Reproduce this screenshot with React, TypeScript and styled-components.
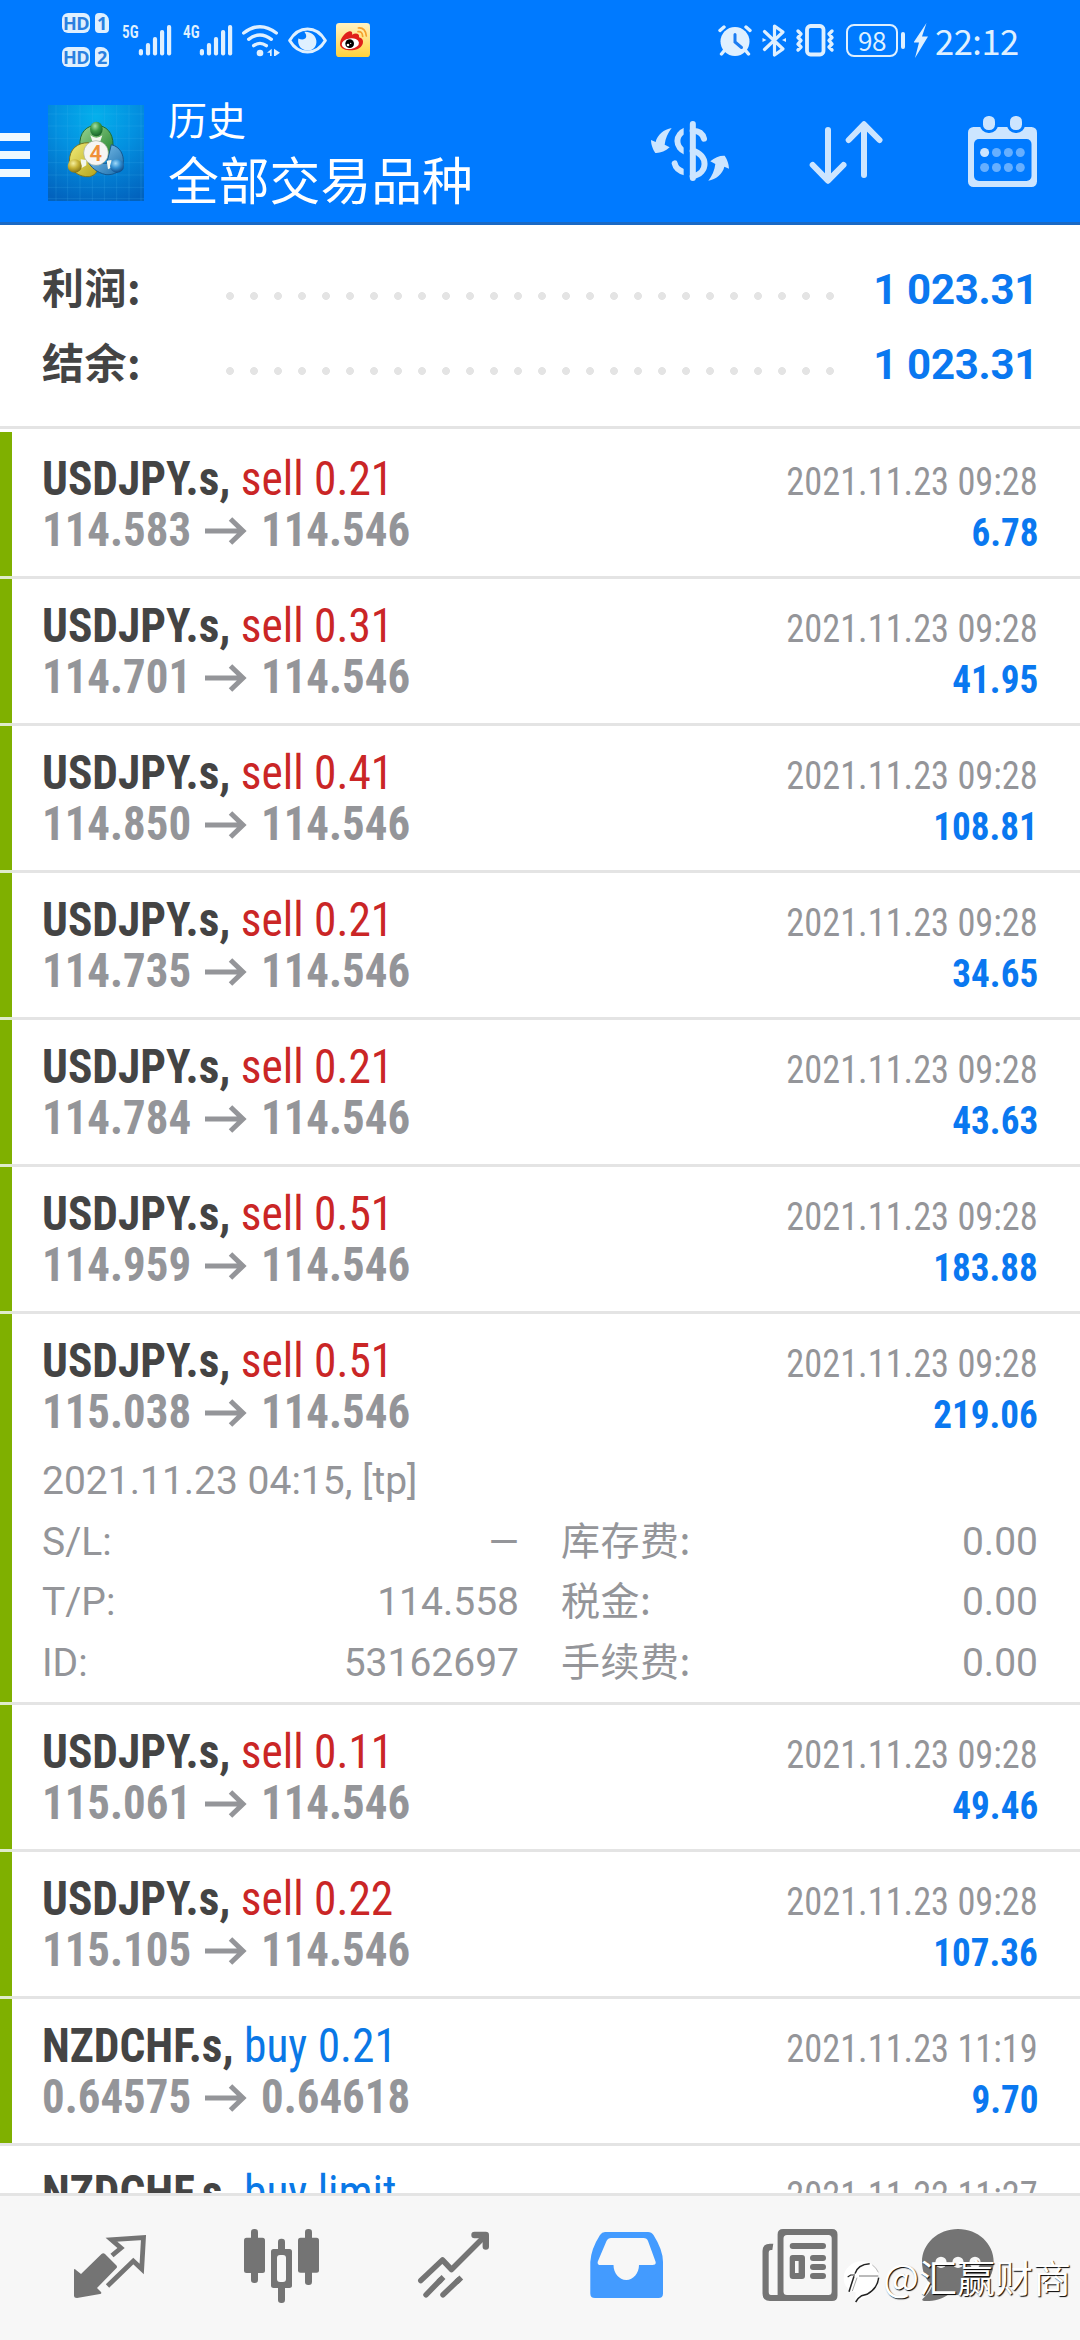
import React from "react";
import styled, { createGlobalStyle, css } from "styled-components";

const BLUE = "#007aff";
const STATUS = "#dff0ff";
const ACTION = "#cce5ff";
const GREEN = "#7fb000";
const GREY = "#949599";
const LINE = "#e4e4e4";
const TAB = "#747474";

const GlobalStyle = createGlobalStyle`
  * { box-sizing: border-box; }
  html, body { margin: 0; padding: 0; background: #fff; }
  body { font-family: Roboto, "Noto Sans CJK SC", sans-serif; overflow: hidden; }
  svg { display: block; flex: none; }
`;

const Screen = styled.div`
  position: relative;
  display: flex;
  flex-direction: column;
  width: 1080px;
  height: 2340px;
  overflow: hidden;
  background: #fff;
`;

/* ---------- header ---------- */

const Header = styled.header`
  flex: none;
  height: 225px;
  background: ${BLUE};
  border-bottom: 3px solid #1a69c4;
`;

const StatusBar = styled.div`
  display: flex;
  justify-content: space-between;
  height: 82px;
  padding: 0 60px 0 62px;
  color: ${STATUS};
`;

const StatusGroup = styled.div`
  display: flex;
  align-items: center;
  height: 80px;
`;

const SimColumn = styled.div`
  display: flex;
  flex-direction: column;
  gap: 14px;
  margin-right: 13px;
`;

const SimRow = styled.div`
  display: flex;
  gap: 5px;
`;

const Badge = styled.span<{ $w: number; $cut?: boolean }>`
  width: ${(p) => p.$w}px;
  height: 20px;
  border-radius: ${(p) => (p.$cut ? "4px 8px 4px 4px" : "6px")};
  background: ${STATUS};
  color: #2a80e0;
  font: 700 18px/21px "Open Sans", sans-serif;
  letter-spacing: -0.5px;
  text-align: center;
`;

const Signal = styled.div<{ $gap: number }>`
  display: flex;
  align-items: flex-start;
  height: 30px;
  margin-right: ${(p) => p.$gap}px;
`;

const NetLabel = styled.span`
  width: 16px;
  font: 600 18.5px/14px "Roboto Condensed", Roboto, sans-serif;
  transform: scaleX(0.82);
  transform-origin: left;
`;

const Clock = styled.span`
  margin-left: 7px;
  font: 400 34.5px/40px "Noto Sans CJK SC", sans-serif;
  letter-spacing: -0.5px;
  width: 85px;
`;

const AppBar = styled.div`
  display: flex;
  align-items: flex-start;
  height: 140px;
  padding-right: 43px;
`;

const Burger = styled.div`
  display: flex;
  flex-direction: column;
  gap: 10px;
  width: 30px;
  margin: 51px 18px 0 0;
`;

const BurgerBar = styled.i`
  height: 8px;
  background: #eef8ff;
`;

const LogoBox = styled.div`
  margin-top: 23px;
  width: 96px;
  height: 96px;
`;

const Titles = styled.div`
  display: flex;
  flex-direction: column;
  flex: 1;
  margin: 8px 0 0 24px;
  color: #fff;
  font-family: "Noto Sans CJK SC", sans-serif;
`;

const Caption = styled.span`
  font-size: 39px;
  line-height: 56px;
`;

const Title = styled.span`
  font-size: 50.8px;
  line-height: 64px;
`;

const Actions = styled.div`
  display: flex;
  align-items: flex-start;
  margin-top: 34px;
`;

const Spaced = styled.div<{ $top?: number; $gap: number }>`
  margin: ${(p) => p.$top ?? 0}px ${(p) => p.$gap}px 0 0;
`;

/* ---------- summary ---------- */

const Summary = styled.section`
  flex: none;
  height: 204px;
  padding: 27px 42px 0;
  border-bottom: 3px solid ${LINE};
`;

const SummaryRow = styled.div`
  display: flex;
  align-items: center;
  height: 75px;
`;

const SummaryLabel = styled.span`
  width: 176px;
  color: #444;
  font: 700 42px/75px Roboto, sans-serif;
`;

const Cjk = styled.span`
  font-family: "Noto Sans CJK SC", sans-serif;
  letter-spacing: 0.5px;
  line-height: 1;
`;

const Leader = styled.span`
  width: 624px;
  height: 24px;
  margin-top: 13px;
  background: radial-gradient(circle at center, ${LINE} 3.6px, transparent 4.2px) 0 0 / 24px 24px repeat-x;
`;

const SummaryValue = styled.span`
  flex: 1;
  color: #0a78f0;
  font: 700 42px/75px Roboto, sans-serif;
  letter-spacing: -0.3px;
  text-align: right;
`;

/* ---------- deals ---------- */

const List = styled.main`
  flex: 1;
  min-height: 0;
  padding-top: 3px;
  overflow: hidden;
`;

const Deal = styled.article<{ $closed: boolean; $tall?: boolean }>`
  height: ${(p) => (p.$tall ? 388 : 144)}px;
  padding: 21px 42px 0 30px;
  border-left: 12px solid ${(p) => (p.$closed ? GREEN : "#fff")};
`;

const Divider = styled.div<{ $tint: boolean }>`
  height: 3px;
  background: ${LINE};
  ${(p) => p.$tint && css`background: linear-gradient(to right, #dfebcb 12px, ${LINE} 12px);`}
`;

const DealLine = styled.div`
  display: flex;
  justify-content: space-between;
  align-items: baseline;
  height: 51px;
  line-height: 51px;
  white-space: pre;
`;

const condensed = css`
  font-family: "Roboto Condensed", Roboto, "Noto Sans CJK SC", sans-serif;
  font-stretch: 75%;
`;

const Symbol = styled.span`
  ${condensed}
  color: #444;
  font-size: 48px;
  font-weight: 700;
  transform: scaleX(0.945);
  transform-origin: left;
`;

const Side = styled.span<{ $buy: boolean }>`
  color: ${(p) => (p.$buy ? "#0a78e6" : "#ca2626")};
  font-weight: 400;
`;

const Prices = styled.span`
  display: flex;
  align-items: center;
  color: ${GREY};
`;

const Price = styled.span`
  ${condensed}
  width: 149px;
  font-size: 48px;
  font-weight: 700;
  transform: scaleX(0.935);
  transform-origin: left;
`;

const ArrowBox = styled.span`
  width: 70px;
  padding: 3px 0 0 14px;
`;

const When = styled.span`
  ${condensed}
  color: ${GREY};
  font-size: 39px;
  transform: scaleX(0.932);
  transform-origin: right;
`;

const Profit = styled.span`
  ${condensed}
  color: #0a78f0;
  font-size: 39px;
  font-weight: 700;
  transform: scaleX(0.952);
  transform-origin: right;
`;

const Details = styled.div`
  margin-top: 14px;
  color: ${GREY};
  font-size: 39px;
  line-height: 60.7px;
`;

const DetailGrid = styled.div`
  display: grid;
  grid-template-columns: 1fr 1fr;
  column-gap: 42px;
`;

const DetailCell = styled.div`
  display: flex;
  justify-content: space-between;
  height: 60.7px;
`;

/* ---------- tab bar ---------- */

const TabBar = styled.nav`
  flex: none;
  display: flex;
  align-items: flex-start;
  height: 147px;
  padding: 33px 0 0 70px;
  border-top: 3px solid ${LINE};
  background: #f7f7f7;
`;

const Tab = styled.div<{ $w: number }>`
  flex: none;
  width: ${(p) => p.$w}px;
`;

const Watermark = styled.div`
  position: absolute;
  left: 843px;
  top: 2249px;
  display: flex;
  align-items: center;
  gap: 2px;
  height: 54px;
  color: #fff;
  font: 400 38px/54px "Noto Sans CJK SC", sans-serif;
  text-shadow: 1px 1px 1px #000;
  white-space: nowrap;
`;

/* ---------- icons ---------- */

const Bars = () => (
  <svg width="34" height="31" viewBox="138 25 34 31" fill={STATUS}>
    <rect x="138.8" y="49" width="4.2" height="6.5" rx="2" />
    <rect x="145.9" y="43" width="4.2" height="12.5" rx="2" />
    <rect x="152.9" y="37" width="4.2" height="18.5" rx="2" />
    <rect x="160" y="30" width="4.2" height="25.5" rx="2" />
    <rect x="167" y="25" width="4.2" height="30.5" rx="2" />
  </svg>
);

const Wifi = () => (
  <svg width="39" height="33" viewBox="36 40 117 99" fill="none" stroke={STATUS} strokeWidth="10" strokeLinecap="round">
    <path d="M41 67Q90 29 139 67" />
    <path d="M56 86Q90 60 124 86" />
    <path d="M71 105Q90 91 109 105" />
    <circle cx="90" cy="127" r="10" fill={STATUS} stroke="none" />
    <path d="M111 126l14-12v22h-5v-10zM132 114l18 12-14 10h-4z" fill={STATUS} stroke="none" />
  </svg>
);

const EyeIcon = () => (
  <svg width="39" height="27" viewBox="173 50 117 80">
    <path d="M178 90C205 44 258 44 285 90C258 136 205 136 178 90Z" fill="none" stroke={STATUS} strokeWidth="9" strokeLinejoin="round" />
    <path d="M222 64C236 82 222 92 204 84C200 105 214 120 232 120C250 120 260 106 258 90C256 74 240 62 222 64Z" fill={STATUS} />
  </svg>
);

const WeiboIcon = () => (
  <svg width="34" height="34" viewBox="318 42 102 102">
    <defs>
      <linearGradient id="wb" x1="0" y1="0" x2="0" y2="1">
        <stop offset="0" stopColor="#fff3c4" />
        <stop offset="1" stopColor="#ffd23c" />
      </linearGradient>
    </defs>
    <rect x="318" y="42" width="102" height="102" rx="10" fill="url(#wb)" />
    <path d="M330 106C330 90 344 70 358 67C366 66 368 71 366 77C378 70 390 74 387 85C398 88 401 96 398 105C392 120 374 125 357 124C342 123 330 116 330 106Z" fill="#e01f1a" />
    <ellipse cx="361" cy="104" rx="26" ry="16" transform="rotate(-8 361 104)" fill="#fff" />
    <circle cx="359" cy="104" r="13" fill="#000" />
    <circle cx="354" cy="108" r="4" fill="#fff" />
    <circle cx="362" cy="103" r="2" fill="#fff" />
    <path d="M385 57Q406 55 409 81M384 68Q397 66 398 82" fill="none" stroke="#f5a02c" strokeWidth="5" strokeLinecap="round" />
  </svg>
);

const AlarmIcon = () => (
  <svg width="34" height="32" viewBox="718 24 34 32">
    <g stroke={STATUS} strokeWidth="3.4" strokeLinecap="round">
      <path d="M720 30.500l4-3.500M750 30.500l-4-3.500M724 51l-2.500 3M746 51l2.500 3" />
    </g>
    <circle cx="735" cy="41.500" r="14.500" fill={STATUS} />
    <path d="M735 34.500v7.500l6.500 5.500" fill="none" stroke="#1b7cf2" strokeWidth="3" strokeLinecap="round" />
  </svg>
);

const BluetoothIcon = () => (
  <svg width="26" height="35" viewBox="761 23 26 35" fill="none" stroke={STATUS} strokeWidth="3.200" strokeLinejoin="round" strokeLinecap="round">
    <path d="M764.500 31.500L783 49L774.500 55V26L783 32L764.500 49.500" />
    <path d="M762.500 38v4l4-2zM786 38v4l-4-2z" fill={STATUS} stroke="none" />
  </svg>
);

const VibrateIcon = () => (
  <svg width="40" height="33" viewBox="794 24 40 33" fill="none" stroke={STATUS} strokeWidth="3.400" strokeLinejoin="round" strokeLinecap="round">
    <rect x="806" y="26" width="16.500" height="28.500" rx="3.500" strokeWidth="3.800" />
    <path d="M797 31l3 3-3 3.500 3 3-3 3.500 3 3-3 3M831 31l-3 3 3 3.500-3 3 3 3.500-3 3 3 3" />
  </svg>
);

const BatteryBox = styled.div`
  display: flex;
  align-items: center;
`;

const BatteryShell = styled.span`
  width: 52px;
  height: 33px;
  border: 2.5px solid ${STATUS};
  border-radius: 8px;
  font: 400 26px/27px "Noto Sans CJK SC", sans-serif;
  letter-spacing: -0.5px;
  text-align: center;
`;

const BatteryNub = styled.i`
  width: 4px;
  height: 17px;
  margin-left: 3px;
  border-radius: 2px;
  background: ${STATUS};
`;

const Bolt = () => (
  <svg width="14" height="35" viewBox="913 23 14 35" fill={STATUS}>
    <path d="M925.500 23L912.500 42.500h5.500L914 58L927 36.500H921z" />
  </svg>
);

const Mt4Logo = () => (
  <svg width="96" height="96" viewBox="24 15 288 288">
    <defs>
      <radialGradient id="lbg" cx="0.5" cy="0.12" r="0.95">
        <stop offset="0" stopColor="#04b0ec" />
        <stop offset="0.45" stopColor="#0390e0" />
        <stop offset="1" stopColor="#0262bd" />
      </radialGradient>
      <linearGradient id="lg" x1="0" y1="0" x2="1" y2="1">
        <stop offset="0" stopColor="#9bd694" />
        <stop offset="1" stopColor="#22832c" />
      </linearGradient>
      <linearGradient id="ly" x1="0" y1="0" x2="1" y2="1">
        <stop offset="0" stopColor="#f2ee7a" />
        <stop offset="1" stopColor="#b3a118" />
      </linearGradient>
      <linearGradient id="lb" x1="0" y1="0" x2="1" y2="1">
        <stop offset="0" stopColor="#8fd0f5" />
        <stop offset="1" stopColor="#1569ab" />
      </linearGradient>
      <radialGradient id="hg" cx="0.4" cy="0.3" r="0.7">
        <stop offset="0" stopColor="#a8e0a4" />
        <stop offset="0.5" stopColor="#3c9a48" />
        <stop offset="1" stopColor="#17642a" />
      </radialGradient>
      <radialGradient id="hy" cx="0.4" cy="0.3" r="0.7">
        <stop offset="0" stopColor="#f6f0a0" />
        <stop offset="0.5" stopColor="#c9b437" />
        <stop offset="1" stopColor="#857414" />
      </radialGradient>
      <radialGradient id="hb" cx="0.4" cy="0.3" r="0.7">
        <stop offset="0" stopColor="#a0dafa" />
        <stop offset="0.5" stopColor="#3390d2" />
        <stop offset="1" stopColor="#0e4c8c" />
      </radialGradient>
    </defs>
    <rect x="24" y="15" width="288" height="288" fill="url(#lbg)" />
    <path d="M48 15v288M83 15v288M120 15v288M157 15v288M193 15v288M230 15v288M267 15v288M303 15v288M24 42h288M24 78h288M24 115h288M24 151h288M24 188h288M24 225h288M24 262h288M24 296h288" stroke="#4bb8f4" strokeOpacity="0.28" strokeWidth="2" />
    <path d="M120 140C116 96 142 76 169 76C198 76 220 98 219 135C216 156 206 166 190 170L140 132Z" fill="url(#lg)" stroke="#1f6b33" strokeWidth="3" />
    <path d="M146 128C112 128 88 146 88 185C92 214 118 232 148 230C166 226 170 216 176 204Z" fill="url(#ly)" stroke="#7b7420" strokeWidth="3" />
    <path d="M214 134C240 140 252 164 250 188C246 214 222 226 198 224C170 218 152 200 146 188L200 190Z" fill="url(#lb)" stroke="#14588f" strokeWidth="3" />
    <path d="M151 106l6 18h24l6-18q-18 14-36 0zM122 178l3 26 14-8v-16zM200 182l4 26 12-6-2-22z" fill="#f3f7ee" />
    <ellipse cx="169" cy="87" rx="19" ry="22" fill="url(#hg)" />
    <ellipse cx="104" cy="198" rx="21" ry="20" fill="url(#hy)" />
    <ellipse cx="231" cy="198" rx="21" ry="20" fill="url(#hb)" />
    <circle cx="168" cy="159" r="37" fill="#f6f5f3" stroke="#8b9a86" strokeWidth="1.500" />
    <text x="167" y="182" textAnchor="middle" fontFamily="Roboto, sans-serif" fontWeight="600" fontSize="66" fill="#f09038">4</text>
  </svg>
);

const SWING =
  "M95 54C72 58 52 74 47 96L33 90C33 105 40 120 46 129C60 130 76 124 89 112L74 104C76 85 84 68 95 54Z";

const ExchangeIcon = () => (
  <svg width="80" height="62" viewBox="30 30 240 186">
    <defs>
      <clipPath id="cutLeft"><rect x="80" y="30" width="51" height="186" /></clipPath>
    </defs>
    <g fill="none" stroke={ACTION} strokeWidth="18" strokeLinecap="round">
      <path d="M158.500 42V204" />
      <path d="M158 62C176 62 188 70 192 86" />
      <path d="M158 122C205 134 206 190 158 199" />
      <g clipPath="url(#cutLeft)">
        <path d="M140 60C103 72 103 114 140 127" />
        <path d="M104 160C107 174 118 184 140 188" />
      </g>
    </g>
    <g fill={ACTION}>
      <path d={SWING} />
      <path d={SWING} transform="rotate(180 150 133)" />
    </g>
  </svg>
);

const SortIcon = () => (
  <svg width="74" height="64" viewBox="809 121 74 64" fill="none" stroke={ACTION} strokeWidth="6" strokeLinecap="round" strokeLinejoin="round">
    <path d="M828 130V180M812.700 165L828 180.700L843.500 165M864 175V125M848.700 140L864 124.300L879.500 140" />
  </svg>
);

const CalendarIcon = () => (
  <svg width="69" height="71" viewBox="968 116 69 71">
    <rect x="968" y="127" width="69" height="60" rx="5.500" fill={ACTION} />
    <rect x="974" y="139" width="57.500" height="42" rx="5" fill={BLUE} />
    <g fill={ACTION} stroke={BLUE} strokeWidth="6" paintOrder="stroke">
      <rect x="983" y="116" width="12" height="14" rx="5.500" />
      <rect x="1010" y="116" width="12" height="14" rx="5.500" />
    </g>
    {[152.5, 167.5].map((y, r) =>
      [984.6, 996.5, 1008.4, 1020.3].map((x, c) => (
        <circle key={`${r}${c}`} cx={x} cy={y} r="4.500" fill={r === 0 && c === 0 ? ACTION : "#66afff"} />
      ))
    )}
  </svg>
);

const PriceArrow = () => (
  <svg width="42" height="28" viewBox="0 0 42 28" fill="none" stroke={GREY} strokeWidth="5">
    <path d="M0 14H38M25.500 2L38 14L25.500 26" />
  </svg>
);

const QuotesIcon = () => (
  <svg width="76" height="76" viewBox="70 2229 76 76">
    <path d="M74 2270.500Q74 2268 76 2270L81 2274L101.500 2254Q103.300 2252.500 105 2254L116.500 2265.500Q117.500 2267 116.500 2268L97 2288L101 2292Q102 2293.500 100 2294L77 2298Q74 2298 74 2295.500Z" fill={TAB} />
    <path d="M112 2255.500L121 2248L111.500 2239.700L143.500 2237.500L141.700 2269L133.300 2261L107.500 2286" fill="none" stroke={TAB} strokeWidth="4.800" />
  </svg>
);

const ChartIcon = () => (
  <svg width="76" height="75" viewBox="244 2229 76 75" fill={TAB}>
    <rect x="251" y="2229" width="7" height="54" rx="3.200" />
    <rect x="244" y="2237.700" width="21" height="35.300" rx="2.500" />
    <rect x="278" y="2238.700" width="7" height="64.300" rx="3.200" />
    <rect x="271" y="2249" width="21" height="39" rx="2.500" />
    <rect x="277" y="2255" width="9" height="27" rx="3" fill="#f7f7f7" />
    <rect x="305" y="2229" width="7" height="56" rx="3.200" />
    <rect x="298" y="2237.700" width="21" height="35" rx="2.500" />
  </svg>
);

const TradeIcon = () => (
  <svg width="76" height="76" viewBox="415 2229 76 76" fill="none" stroke={TAB} strokeWidth="5.500" strokeLinejoin="round" strokeLinecap="round">
    <path d="M420.800 2280.500L442.500 2260L451.500 2269.500L485 2236" />
    <path d="M474.500 2235H485.800V2246.500" strokeWidth="6.400" />
    <path d="M426 2294.800L440.500 2280M443 2294.800L458.500 2280" />
    <path d="M438.500 2282L443.500 2277M456.500 2282L461.300 2277.500" strokeLinecap="butt" />
  </svg>
);

const HistoryIcon = () => (
  <svg width="74" height="76" viewBox="590 2229 74 76">
    <path
      fillRule="evenodd"
      fill="#439bff"
      d="M605 2232H648Q651.500 2232 653.500 2235Q663 2250 663 2262V2293.500Q663 2298 658.500 2298H595Q590.300 2298 590.300 2293.500V2262Q591 2249 600 2235Q602 2232 605 2232ZM611 2238Q608 2238 606.500 2241L597.800 2261.500Q597 2265 600.500 2265H613.500C613.500 2273 619 2280 626.300 2280C633.500 2280 639 2273 639 2265H652.500Q656.500 2265 655.500 2261.500L648 2241Q647 2238 643.500 2238Z"
    />
  </svg>
);

const NewsIcon = () => (
  <svg width="76" height="75" viewBox="762 2229 76 75" fill={TAB}>
    <path fillRule="evenodd" d="M783 2229H832Q837.500 2229 837.500 2234.500V2295.500Q837.500 2301 832 2301H770Q762.500 2301 762.500 2293.500V2251Q762.500 2243.700 770 2243.700H773.300L772.300 2250H771Q768.700 2250 768.700 2253V2292Q768.700 2295 771 2295H777.600V2234.500Q777.600 2229 783 2229ZM787 2235Q783.500 2235 783.500 2238.500V2291.500Q783.500 2295 787 2295H828.500Q831.700 2295 831.700 2291.500V2238.500Q831.700 2235 828.500 2235Z" />
    <rect x="789.700" y="2243" width="36.300" height="6" rx="3" />
    <path fillRule="evenodd" d="M792.700 2255H802Q805 2255 805 2258V2276Q805 2279 802 2279H792.700Q789.700 2279 789.700 2276V2258Q789.700 2255 792.700 2255ZM795 2261V2273H798.600V2261Z" />
    <rect x="810" y="2255" width="16" height="6" rx="3" />
    <rect x="810" y="2264" width="16" height="6" rx="3" />
    <rect x="810" y="2273" width="16" height="6" rx="3" />
  </svg>
);

const ChatIcon = () => (
  <svg width="74" height="75" viewBox="921 2229 74 75">
    <path d="M958 2229C978 2229 993.700 2243.500 993.700 2262C993.700 2281 978 2295 958 2295C955 2295 951.500 2294.600 949 2294C942 2299.500 932 2301.500 924 2301Q921 2300.500 923 2298.500Q929 2293.500 932 2286C926 2280 922 2271.500 922 2262C922 2243.500 938 2229 958 2229Z" fill={TAB} />
    <g fill="#f7f7f7">
      <circle cx="941" cy="2262.300" r="5.600" />
      <circle cx="958" cy="2262.300" r="5.600" />
      <circle cx="975" cy="2262.300" r="5.600" />
    </g>
  </svg>
);

const BrandMark = () => (
  <svg width="38" height="54" viewBox="24 90 114 162">
    <path d="M80 127C50 127 26 150 26 177C26 200 40 216 62 220L60 248C104 236 132 210 132 176C132 150 110 127 80 127Z" fill="#fff" />
    <g fill="none" stroke="#222" strokeWidth="4.500">
      <path d="M42 218L57 172M60 164Q68 136 104 134" />
      <path d="M52 216L66 176" stroke="#999" strokeWidth="2.500" />
      <path d="M38 174L47 168H60" strokeWidth="3.500" />
      <path d="M72 171H130" stroke="#777" strokeWidth="3" />
      <path d="M131 176Q128 208 96 226L80 230Q70 236 62 249" />
      <path d="M112 138Q124 146 130 160" stroke="#aaa" strokeWidth="2.500" />
    </g>
  </svg>
);

/* ---------- data ---------- */

type Extra = { opened: string; rows: [string, string, string, string][] };
type DealData = {
  symbol: string;
  side: string;
  from?: string;
  to?: string;
  time: string;
  profit?: string;
  pending?: boolean;
  extra?: Extra;
};

const T = "2021.11.23 09:28";
const deals: DealData[] = [
  { symbol: "USDJPY.s", side: "sell 0.21", from: "114.583", to: "114.546", time: T, profit: "6.78" },
  { symbol: "USDJPY.s", side: "sell 0.31", from: "114.701", to: "114.546", time: T, profit: "41.95" },
  { symbol: "USDJPY.s", side: "sell 0.41", from: "114.850", to: "114.546", time: T, profit: "108.81" },
  { symbol: "USDJPY.s", side: "sell 0.21", from: "114.735", to: "114.546", time: T, profit: "34.65" },
  { symbol: "USDJPY.s", side: "sell 0.21", from: "114.784", to: "114.546", time: T, profit: "43.63" },
  { symbol: "USDJPY.s", side: "sell 0.51", from: "114.959", to: "114.546", time: T, profit: "183.88" },
  {
    symbol: "USDJPY.s", side: "sell 0.51", from: "115.038", to: "114.546", time: T, profit: "219.06",
    extra: {
      opened: "2021.11.23 04:15, [tp]",
      rows: [
        ["S/L:", "—", "库存费:", "0.00"],
        ["T/P:", "114.558", "税金:", "0.00"],
        ["ID:", "53162697", "手续费:", "0.00"],
      ],
    },
  },
  { symbol: "USDJPY.s", side: "sell 0.11", from: "115.061", to: "114.546", time: T, profit: "49.46" },
  { symbol: "USDJPY.s", side: "sell 0.22", from: "115.105", to: "114.546", time: T, profit: "107.36" },
  { symbol: "NZDCHF.s", side: "buy 0.21", from: "0.64575", to: "0.64618", time: "2021.11.23 11:19", profit: "9.70" },
  { symbol: "NZDCHF.s", side: "buy limit", time: "2021.11.22 11:27", pending: true },
];

const DealRow = ({ deal, tint }: { deal: DealData; tint: boolean }) => (
  <>
    <Deal $closed={!deal.pending} $tall={!!deal.extra}>
      <DealLine>
        <Symbol>
          {deal.symbol}, <Side $buy={deal.side.startsWith("buy")}>{deal.side}</Side>
        </Symbol>
        <When>{deal.time}</When>
      </DealLine>
      {deal.from && (
        <DealLine>
          <Prices>
            <Price>{deal.from}</Price>
            <ArrowBox><PriceArrow /></ArrowBox>
            <Price>{deal.to}</Price>
          </Prices>
          <Profit>{deal.profit}</Profit>
        </DealLine>
      )}
      {deal.extra && (
        <Details>
          <div>{deal.extra.opened}</div>
          <DetailGrid>
            {deal.extra.rows.map(([a, b, c, d]) => (
              <React.Fragment key={a}>
                <DetailCell><span>{a}</span><span>{b}</span></DetailCell>
                <DetailCell><span><Cjk>{c}</Cjk></span><span>{d}</span></DetailCell>
              </React.Fragment>
            ))}
          </DetailGrid>
        </Details>
      )}
    </Deal>
    <Divider $tint={tint} />
  </>
);

export default function App() {
  return (
    <Screen>
      <GlobalStyle />
      <Header>
        <StatusBar>
          <StatusGroup>
            <SimColumn>
              <SimRow><Badge $w={28}>HD</Badge><Badge $w={14} $cut>1</Badge></SimRow>
              <SimRow><Badge $w={28}>HD</Badge><Badge $w={14} $cut>2</Badge></SimRow>
            </SimColumn>
            <Signal $gap={11}><NetLabel>5G</NetLabel><Bars /></Signal>
            <Signal $gap={9}><NetLabel>4G</NetLabel><Bars /></Signal>
            <Spaced $gap={7}><Wifi /></Spaced>
            <Spaced $gap={9}><EyeIcon /></Spaced>
            <WeiboIcon />
          </StatusGroup>
          <StatusGroup>
            <Spaced $gap={9}><AlarmIcon /></Spaced>
            <Spaced $gap={8}><BluetoothIcon /></Spaced>
            <Spaced $gap={11}><VibrateIcon /></Spaced>
            <Spaced $gap={9}><BatteryBox><BatteryShell>98</BatteryShell><BatteryNub /></BatteryBox></Spaced>
            <Bolt />
            <Clock>22:12</Clock>
          </StatusGroup>
        </StatusBar>
        <AppBar>
          <Burger><BurgerBar /><BurgerBar /><BurgerBar /></Burger>
          <LogoBox><Mt4Logo /></LogoBox>
          <Titles>
            <Caption>历史</Caption>
            <Title>全部交易品种</Title>
          </Titles>
          <Actions>
            <Spaced $top={4} $gap={79}><ExchangeIcon /></Spaced>
            <Spaced $top={5} $gap={85}><SortIcon /></Spaced>
            <CalendarIcon />
          </Actions>
        </AppBar>
      </Header>
      <Summary>
        {["利润:", "结余:"].map((label) => (
          <SummaryRow key={label}>
            <SummaryLabel><Cjk>{label}</Cjk></SummaryLabel>
            <Leader />
            <SummaryValue>1 023.31</SummaryValue>
          </SummaryRow>
        ))}
      </Summary>
      <List>
        {deals.map((deal, i) => (
          <DealRow key={i} deal={deal} tint={i < deals.length - 2} />
        ))}
      </List>
      <TabBar>
        <Tab $w={174}><QuotesIcon /></Tab>
        <Tab $w={171}><ChartIcon /></Tab>
        <Tab $w={175}><TradeIcon /></Tab>
        <Tab $w={172}><HistoryIcon /></Tab>
        <Tab $w={159}><NewsIcon /></Tab>
        <Tab $w={74}><ChatIcon /></Tab>
      </TabBar>
      <Watermark><BrandMark />@汇赢财商</Watermark>
    </Screen>
  );
}
